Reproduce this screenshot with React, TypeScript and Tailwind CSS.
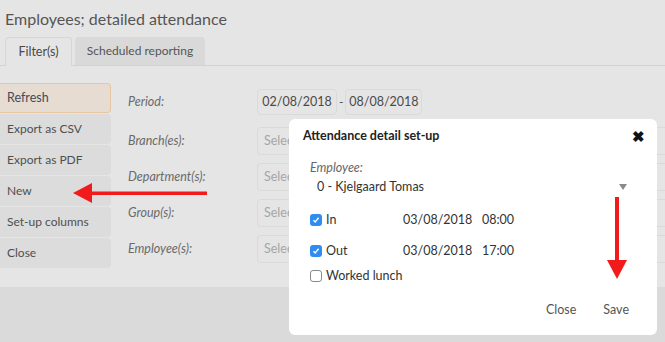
const filterRows = [
  { label: "Branch(es):" },
  { label: "Department(s):" },
  { label: "Group(s):" },
  { label: "Employee(s):" },
];

const sideButtons = ["Export as CSV", "Export as PDF", "New", "Set-up columns", "Close"];

const CheckBox = ({ checked }: { checked: boolean }) =>
  checked ? (
    <span className="w-[12px] h-[12px] rounded-[3px] bg-[#2f8cf0] flex items-center justify-center">
      <svg width="8" height="8" viewBox="0 0 8 8">
        <path d="M1.5 4.2 L3.2 6 L6.6 1.8" stroke="#fff" strokeWidth="1.4" fill="none" />
      </svg>
    </span>
  ) : (
    <span className="w-[12px] h-[12px] rounded-[3px] border border-[#8a8a8a] bg-white" />
  );

const App = () => {
  return (
    <div
      className="relative w-[665px] h-[342px] overflow-hidden bg-[#dadada] text-[#4a4a4a]"
      style={{ fontFamily: "Lato, 'Open Sans', sans-serif" }}
    >
      {/* page (dimmed under the modal) */}
      <div className="bg-[#e5e5e5]">
        <h1 className="px-[5px] pt-[8px] h-[37px] text-[16px] leading-[22px] text-[#555]">
          Employees; detailed attendance
        </h1>
        <div className="flex gap-[3px] pl-[5px] h-[29px] border-b border-[#d2d2d2]">
          <div className="w-[67px] h-[29px] -mb-px border border-b-0 border-[#d6d6d6] rounded-t-[4px] bg-[#e5e5e5] flex items-center justify-center text-[12.5px] text-[#4a4a4a]">
            Filter(s)
          </div>
          <div className="w-[130px] h-[28px] rounded-t-[4px] bg-[#d9d9d9] flex items-center justify-center text-[12px] text-[#555]">
            Scheduled reporting
          </div>
        </div>

        <div className="flex h-[221px]">
          <div className="w-[111px] pt-[17px] flex flex-col gap-px">
            <div className="h-[30px] pl-[7px] flex items-center text-[12.5px] text-[#454a5a] bg-[#e6dcd2] border border-l-0 border-[#e8c6a2] rounded-r-[4px]">
              Refresh
            </div>
            {sideButtons.map((b) => (
              <div
                key={b}
                className="h-[30px] pl-[7px] flex items-center text-[12px] text-[#4f4f4f] bg-[#dcdcdc] rounded-r-[4px]"
              >
                {b}
              </div>
            ))}
          </div>

          <div className="flex-1 pl-[17px] pt-[23px]">
            <div className="flex items-center h-[26px]">
              <span className="w-[129px] italic text-[12.5px] text-[#6a6a6a]">Period:</span>
              <span className="h-[26px] w-[80px] rounded-[4px] border border-[#dadada] flex items-center justify-center text-[12.5px] text-[#4a4a4a]">
                02/08/2018
              </span>
              <span className="px-[2px] text-[12px] text-[#4a4a4a]">-</span>
              <span className="h-[26px] w-[77px] rounded-[4px] border border-[#dadada] flex items-center justify-center text-[12.5px] text-[#4a4a4a]">
                08/08/2018
              </span>
            </div>
            <div className="mt-[12px] flex flex-col gap-[8px]">
              {filterRows.map((r) => (
                <div key={r.label} className="flex items-center h-[28px]">
                  <span className="w-[129px] italic text-[12.5px] text-[#6a6a6a]">{r.label}</span>
                  <span className="h-[28px] flex-1 rounded-l-[4px] border border-r-0 border-[#dadada] pl-[6px] flex items-center text-[12.5px] text-[#a5a5a5]">
                    Select...
                  </span>
                </div>
              ))}
            </div>
          </div>
        </div>
      </div>

      {/* modal */}
      <div className="absolute left-[289px] top-[119px] w-[368px] h-[216px] bg-white rounded-[6px] text-[#333]">
        <div className="flex items-center justify-between pl-[14px] pr-[12px] pt-[4px] h-[30px]">
          <span className="text-[12.5px] font-bold text-[#222]">Attendance detail set-up</span>
          <span className="text-[15px] font-bold text-[#111] leading-none">✖</span>
        </div>
        <div className="pl-[21px] pr-[30px] pt-[11px]">
          <div className="italic text-[12.5px] text-[#666] h-[16px] leading-[16px]">Employee:</div>
          <div className="flex items-center justify-between pl-[7px] h-[22px] text-[12.5px]">
            <span>0 - Kjelgaard Tomas</span>
            <svg width="8" height="6" viewBox="0 0 8 6">
              <path d="M0 0 H8 L4 6 Z" fill="#8a8a8a" />
            </svg>
          </div>
          <div className="mt-[11px] flex flex-col">
            <div className="flex items-center h-[22px] text-[12.5px]">
              <CheckBox checked />
              <span className="ml-[4px] w-[77px]">In</span>
              <span className="w-[79px]">03/08/2018</span>
              <span>08:00</span>
            </div>
            <div className="mt-[9px] flex items-center h-[22px] text-[12.5px]">
              <CheckBox checked />
              <span className="ml-[4px] w-[77px]">Out</span>
              <span className="w-[79px]">03/08/2018</span>
              <span>17:00</span>
            </div>
            <div className="mt-[3px] flex items-center h-[22px] text-[12.5px]">
              <CheckBox checked={false} />
              <span className="ml-[4px]">Worked lunch</span>
            </div>
          </div>
        </div>
        <div className="flex justify-end gap-[27px] pr-[28px] mt-[14px] text-[12.5px] text-[#555]">
          <span>Close</span>
          <span>Save</span>
        </div>
      </div>

      {/* red annotation arrows */}
      <svg className="absolute left-[70px] top-[180px]" width="140" height="26" viewBox="0 0 140 26">
        <rect x="20" y="11.5" width="117" height="3.5" fill="#f21b1b" />
        <path d="M3 13 L22 3 L22 23 Z" fill="#f21b1b" />
      </svg>
      <svg className="absolute left-[605px] top-[196px]" width="24" height="86" viewBox="0 0 24 86">
        <rect x="10" y="1" width="4" height="65" fill="#f21b1b" />
        <path d="M2 64 H22 L12 83 Z" fill="#f21b1b" />
      </svg>
    </div>
  );
};

export default App;
